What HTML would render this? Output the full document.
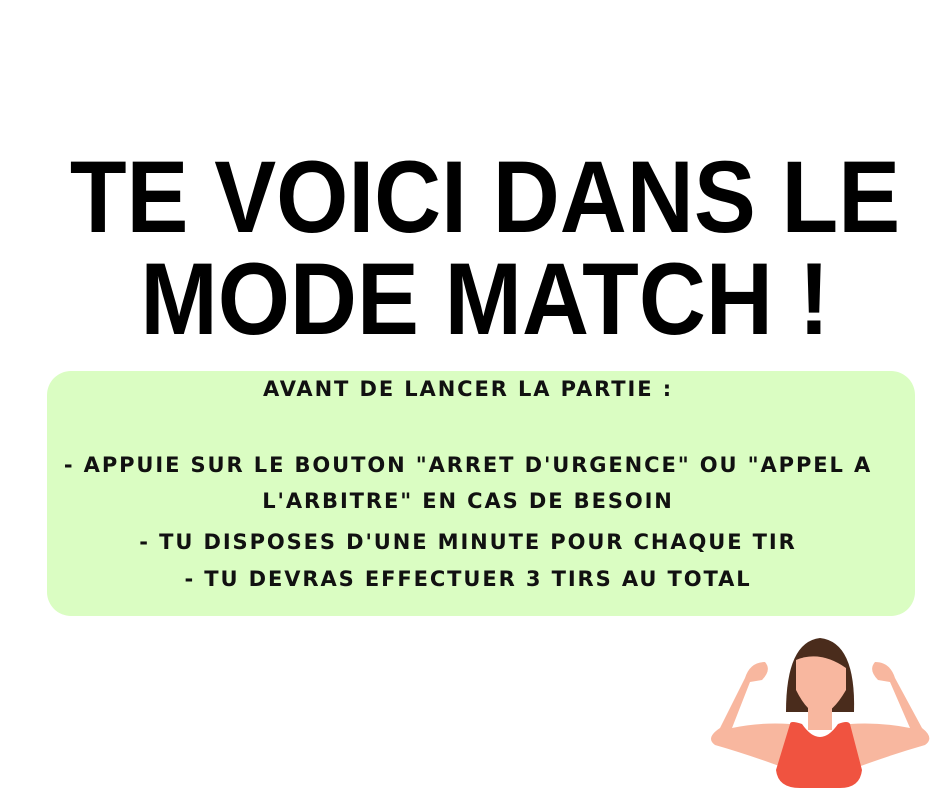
<!DOCTYPE html>
<html><head><meta charset="utf-8"><style>
body{margin:0;width:940px;height:788px;background:#fff;overflow:hidden;position:relative;font-family:"Liberation Sans",sans-serif}
.h{position:absolute;left:15px;width:940px;text-align:center;font-weight:bold;font-size:102px;line-height:102px;color:#000;white-space:nowrap;transform:scaleX(0.91)}
.box{position:absolute;left:47px;top:371px;width:868px;height:245px;background:#dafdc2;border-radius:24px}
.t{position:absolute;left:0;width:936px;text-align:center;font-family:"DejaVu Sans",sans-serif;font-weight:bold;font-size:21px;color:#111;white-space:nowrap;letter-spacing:1.9px}
</style></head><body>
<div class="h" style="top:146px">TE VOICI DANS LE</div>
<div class="h" style="top:248px">MODE MATCH !</div>
<div class="box"></div>
<div class="t" style="top:377px">AVANT DE LANCER LA PARTIE :</div>
<div class="t" style="top:453px">- APPUIE SUR LE BOUTON "ARRET D'URGENCE" OU "APPEL A</div>
<div class="t" style="top:489px">L'ARBITRE" EN CAS DE BESOIN</div>
<div class="t" style="top:530px">- TU DISPOSES D'UNE MINUTE POUR CHAQUE TIR</div>
<div class="t" style="top:567px">- TU DEVRAS EFFECTUER 3 TIRS AU TOTAL</div>
<svg style="position:absolute;left:690px;top:620px" width="250" height="168" viewBox="0 0 250 168">
<path d="M96 92 Q96 22 130 18 Q166 22 164 92 Z" fill="#4a2c1c"/>
<path d="M30 108 L55 58 Q60 42 75 42 Q82 50 72 60 L60 62 L42 108 Q70 102 100 104 L100 150 Q60 135 25 125 Q15 118 30 108Z" fill="#f8b79f"/>
<path d="M232 108 L205 58 Q200 42 185 42 Q178 50 188 60 L200 62 L220 108 Q190 102 160 104 L160 150 Q200 135 235 125 Q245 118 232 108Z" fill="#f8b79f"/>
<path d="M106 40 Q130 30 156 48 L156 70 Q142 94 130 94 Q118 94 106 70 Z" fill="#f8b79f"/>
<rect x="118" y="80" width="24" height="30" fill="#f8b79f"/>
<path d="M100 104 Q100 100 112 104 Q130 130 148 104 Q158 100 160 104 L172 150 Q170 168 150 168 L110 168 Q88 168 86 150 Z" fill="#f05340"/>
</svg>
</body></html>
